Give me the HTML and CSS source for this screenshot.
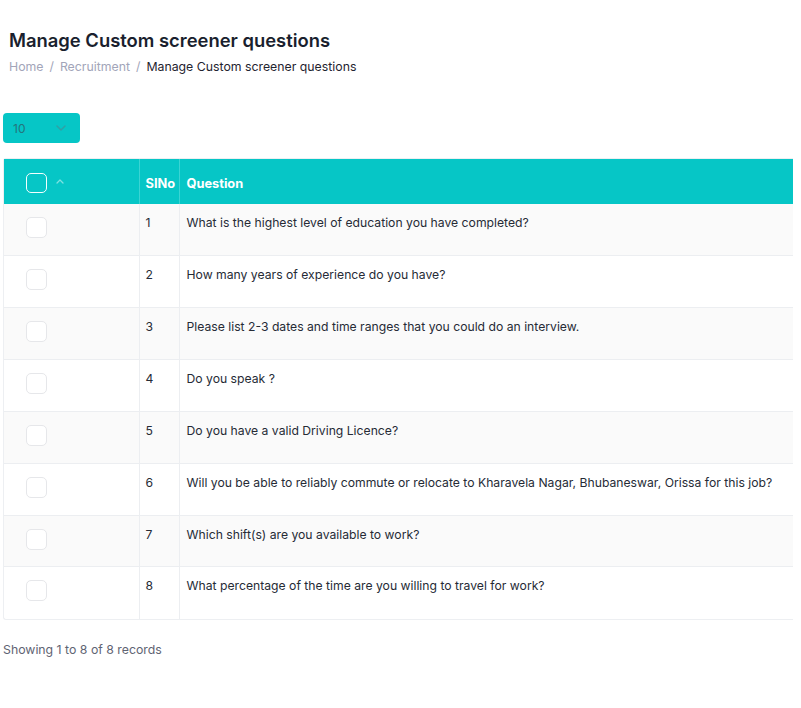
FILE: index.html
```html
<!DOCTYPE html>
<html>
<head>
<meta charset="utf-8">
<link rel="stylesheet" href="styles.css">
</head>
<body>
<div class="page">
  <div class="head">
    <h1 class="title">Manage Custom screener questions</h1>
    <div class="crumbs">
      <span class="crumb-link">Home</span>
      <span class="sep">/</span>
      <span class="crumb-link">Recruitment</span>
      <span class="sep">/</span>
      <span class="crumb-current">Manage Custom screener questions</span>
    </div>
  </div>

  <div class="length">
    <span class="length-val">10</span>
    <svg class="chev" width="10" height="6" viewBox="0 0 10 6"><path d="M1 1l4 4 4-4" fill="none" stroke="currentColor" stroke-width="1.5" stroke-linecap="round" stroke-linejoin="round"/></svg>
  </div>

  <div class="table-wrap">
    <table class="grid">
      <thead>
        <tr>
          <th class="c-check"><span class="cb cb-head"></span><svg class="sort" width="8" height="5" viewBox="0 0 8 5"><path d="M1 4l3-3 3 3" fill="none" stroke="currentColor" stroke-width="1.3" stroke-linecap="round" stroke-linejoin="round"/></svg></th>
          <th class="c-no">SINo</th>
          <th class="c-q">Question</th>
        </tr>
      </thead>
      <tbody>
        <tr><td class="c-check"><span class="cb"></span></td><td class="c-no">1</td><td class="c-q">What is the highest level of education you have completed?</td></tr>
        <tr><td class="c-check"><span class="cb"></span></td><td class="c-no">2</td><td class="c-q">How many years of experience do you have?</td></tr>
        <tr><td class="c-check"><span class="cb"></span></td><td class="c-no">3</td><td class="c-q">Please list 2-3 dates and time ranges that you could do an interview.</td></tr>
        <tr><td class="c-check"><span class="cb"></span></td><td class="c-no">4</td><td class="c-q">Do you speak ?</td></tr>
        <tr><td class="c-check"><span class="cb"></span></td><td class="c-no">5</td><td class="c-q">Do you have a valid Driving Licence?</td></tr>
        <tr><td class="c-check"><span class="cb"></span></td><td class="c-no">6</td><td class="c-q">Will you be able to reliably commute or relocate to Kharavela Nagar, Bhubaneswar, Orissa for this job?</td></tr>
        <tr><td class="c-check"><span class="cb"></span></td><td class="c-no">7</td><td class="c-q">Which shift(s) are you available to work?</td></tr>
        <tr><td class="c-check"><span class="cb"></span></td><td class="c-no">8</td><td class="c-q">What percentage of the time are you willing to travel for work?</td></tr>
      </tbody>
    </table>
  </div>

  <div class="info">Showing 1 to 8 of 8 records</div>
</div>
</body>
</html>
```
FILE: styles.css
```css
* { box-sizing: border-box; }
html, body { margin: 0; padding: 0; background: #fff; }
body {
  font-family: Inter, "Noto Sans", "Liberation Sans", sans-serif;
  color: #1f2430;
  width: 801px;
  overflow: hidden;
}
.page { padding: 0 0 0 3px; }
.head { padding: 29px 0 0 6px; }
.title {
  margin: 0;
  font-size: 18.4px;
  font-weight: 600;
  line-height: 22px;
  color: #1a1f2e;
}
.crumbs {
  margin-top: 8px;
  font-size: 12.3px;
  line-height: 16px;
  display: flex;
  gap: 6px;
}
.crumb-link { color: #a2a5b9; }
.sep { color: #a2a5b9; }
.crumb-current { color: #1f2430; }

.length {
  margin-top: 38px;
  width: 77px;
  height: 30px;
  background: #06c6c6;
  border-radius: 4px;
  display: flex;
  align-items: center;
  justify-content: space-between;
  padding: 0 14px 0 10px;
}
.length-val { font-size: 12px; color: #23757c; }
.chev { color: #30a0a5; }

.table-wrap {
  margin-top: 15px;
  width: 790px;
  border: 1px solid #edeff2;
  border-right: none;
  border-radius: 3px 0 0 3px;
}
.grid {
  width: 100%;
  border-collapse: collapse;
  table-layout: fixed;
}
.grid th {
  background: #06c6c6;
  color: #fff;
  font-size: 12.8px;
  font-weight: 700;
  text-align: left;
  height: 45px;
  padding: 4px 6px 0;
  vertical-align: middle;
}
.grid th + th, .grid td + td { border-left: 1px solid #eceef1; }
.grid thead th + th { border-left: 1px solid #3ad4d4; }
.c-check { width: 135px; }
.c-no { width: 40px; }
.grid th.c-check { padding: 0 0 0 22px; }
.grid .c-q { padding-left: 7px; }
.cb {
  display: inline-block;
  width: 21px;
  height: 21px;
  border: 1px solid #e6e7ea;
  border-radius: 5px;
  background: #fff;
  vertical-align: middle;
}
.cb-head {
  background: transparent;
  border-color: #f4ffff;
  width: 21px;
  height: 20px;
  margin-top: 2px;
}
.sort {
  color: #7ee1e1;
  vertical-align: top;
  margin: 8px 0 0 9px;
}
.grid td {
  height: 51.85px;
  vertical-align: top;
  font-size: 12.2px;
  line-height: 16px;
  padding: 11px 6px 0;
  color: #262b36;
  border-top: 1px solid #eceef1;
}
.grid tbody tr:first-child td { border-top: none; }
.grid tbody tr:nth-child(odd) td { background: #fafafa; }
.grid td.c-check { padding: 13px 0 0 22px; }
.info {
  margin-top: 22px;
  font-size: 12.3px;
  color: #5f6473;
  line-height: 16px;
}
```
